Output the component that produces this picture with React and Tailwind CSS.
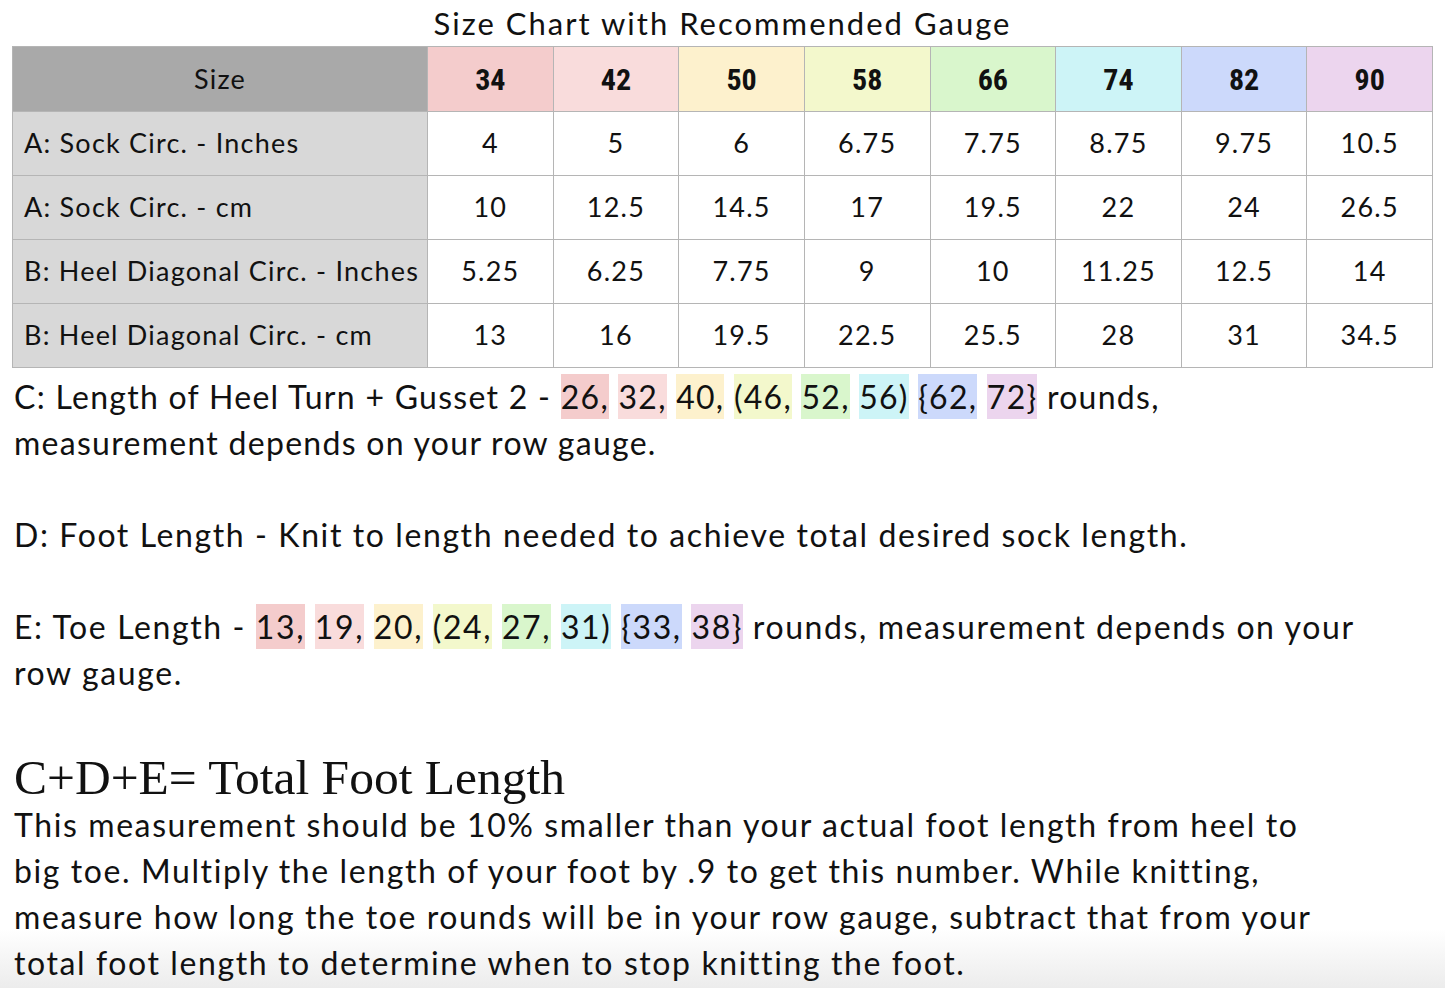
import React from 'react';

const sizes = [
  { label: '34', bg: 'bg-[#f4cccc]' },
  { label: '42', bg: 'bg-[#f9dcdc]' },
  { label: '50', bg: 'bg-[#fdf1cd]' },
  { label: '58', bg: 'bg-[#f3f8cc]' },
  { label: '66', bg: 'bg-[#d9f6cc]' },
  { label: '74', bg: 'bg-[#cdf4f7]' },
  { label: '82', bg: 'bg-[#ccd9fb]' },
  { label: '90', bg: 'bg-[#ecd5ee]' }
];

const rows = [
  { label: 'A: Sock Circ. - Inches', values: ['4', '5', '6', '6.75', '7.75', '8.75', '9.75', '10.5'] },
  { label: 'A: Sock Circ. - cm', values: ['10', '12.5', '14.5', '17', '19.5', '22', '24', '26.5'] },
  { label: 'B: Heel Diagonal Circ. - Inches', values: ['5.25', '6.25', '7.75', '9', '10', '11.25', '12.5', '14'] },
  { label: 'B: Heel Diagonal Circ. - cm', values: ['13', '16', '19.5', '22.5', '25.5', '28', '31', '34.5'] }
];

const Hl = ({ i, children }) => (
  <span className={`${sizes[i].bg} py-[3px]`}>{children}</span>
);

const Series = ({ vals }) => (
  <>
    <Hl i={0}>{vals[0]},</Hl> <Hl i={1}>{vals[1]},</Hl> <Hl i={2}>{vals[2]},</Hl>{' '}
    <Hl i={3}>({vals[3]},</Hl> <Hl i={4}>{vals[4]},</Hl> <Hl i={5}>{vals[5]})</Hl>{' '}
    <Hl i={6}>{'{'}{vals[6]},</Hl> <Hl i={7}>{vals[7]}{'}'}</Hl>
  </>
);

const App = () => {
  return (
    <div
      className="w-[1445px] h-[988px] overflow-hidden bg-[linear-gradient(to_bottom,#ffffff_94%,#ececec)] text-[#111]"
      style={{ fontFamily: 'Lato, "Open Sans", sans-serif' }}
    >
      {/* Title */}
      <div className="h-[46px] flex items-center justify-center text-[31px] tracking-[0.065em] leading-none">
        Size Chart with Recommended Gauge
      </div>

      {/* Table */}
      <div className="ml-[12px] w-[1421px]">
        <table className="w-full border-collapse table-fixed">
          <colgroup>
            <col className="w-[415px]" />
            {sizes.map((s) => <col key={s.label} />)}
          </colgroup>
          <thead>
            <tr className="h-[65px]">
              <th className="bg-[#a9a9a9] border border-[#b5b5b5] font-normal text-[27px] tracking-[0.045em]">Size</th>
              {sizes.map((s) => (
                <th
                  key={s.label}
                  className={`${s.bg} border border-[#b5b5b5] text-[30px] font-bold`}
                  style={{ fontFamily: '"Liberation Sans Narrow", "Roboto Condensed", Roboto, sans-serif' }}
                >
                  {s.label}
                </th>
              ))}
            </tr>
          </thead>
          <tbody>
            {rows.map((r) => (
              <tr key={r.label} className="h-[64px]">
                <td className="bg-[#d8d8d8] border border-[#b5b5b5] text-[27px] tracking-[0.045em] pl-[11px] whitespace-nowrap">{r.label}</td>
                {r.values.map((v, i) => (
                  <td key={i} className="bg-white border border-[#b5b5b5] text-[27px] tracking-[0.045em] text-center">{v}</td>
                ))}
              </tr>
            ))}
          </tbody>
        </table>
      </div>

      {/* Notes */}
      <div className="pl-[14px] text-[32px] tracking-[0.05em] leading-[46px] mt-[6px]">
        <p className="tracking-[0.04em]">
          C: Length of Heel Turn + Gusset 2 - <Series vals={['26', '32', '40', '46', '52', '56', '62', '72']} /> rounds,
          <br />
          measurement depends on your row gauge.
        </p>
        <p className="mt-[46px]">D: Foot Length - Knit to length needed to achieve total desired sock length.</p>
        <p className="mt-[46px]">
          E: Toe Length - <Series vals={['13', '19', '20', '24', '27', '31', '33', '38']} /> rounds, measurement depends on your
          <br />
          row gauge.
        </p>
        <h2
          className="mt-[58px] text-[49.5px] tracking-normal leading-[48px]"
          style={{ fontFamily: '"Liberation Serif", "DejaVu Serif", serif' }}
        >
          C+D+E= Total Foot Length
        </h2>
        <p>
          This measurement should be 10% smaller than your actual foot length from heel to
          <br />
          big toe. Multiply the length of your foot by .9 to get this number. While knitting,
          <br />
          measure how long the toe rounds will be in your row gauge, subtract that from your
          <br />
          total foot length to determine when to stop knitting the foot.
        </p>
      </div>
    </div>
  );
};

export default App;
